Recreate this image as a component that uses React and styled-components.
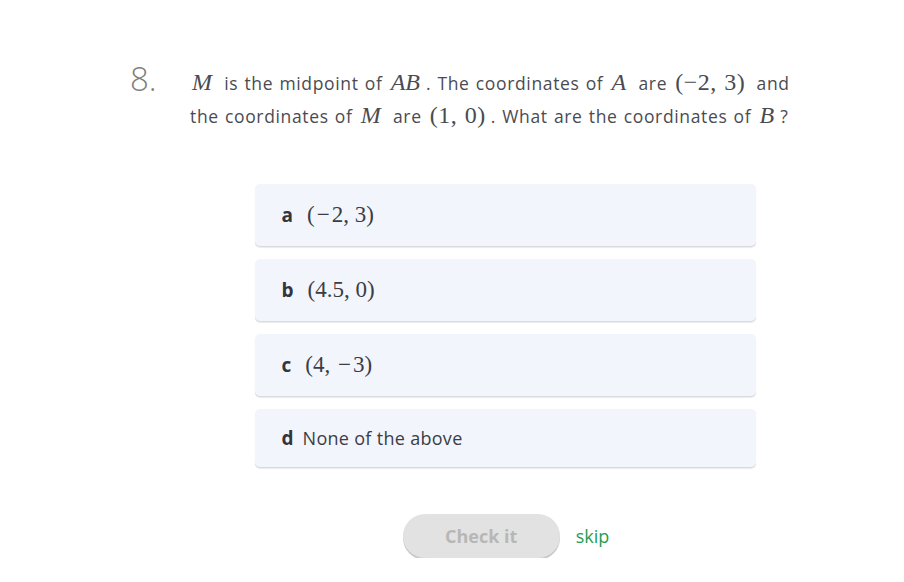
import React from 'react';
import styled, { createGlobalStyle } from 'styled-components';

const GlobalStyle = createGlobalStyle`
  html, body {
    margin: 0;
    padding: 0;
    background: #ffffff;
  }
  body {
    font-family: "Open Sans", Lato, sans-serif;
    color: #3b3d45;
  }
`;

const OpSpan = styled.span`
  margin: 0 2px;
`;

function Op({ children }) {
  return <OpSpan>{children}</OpSpan>;
}

const CHOICES = [
  { letter: 'a', math: true, content: <>(<Op>−</Op>2, 3)</> },
  { letter: 'b', math: true, content: <>(4.5, 0)</> },
  { letter: 'c', math: true, content: <>(4, <Op>−</Op>3)</> },
  { letter: 'd', math: false, content: 'None of the above' },
];

const Page = styled.div`
  padding: 61px 0 0 130px;
  display: flex;
  align-items: flex-start;
`;

const Number = styled.div`
  width: 60px;
  flex-shrink: 0;
  font-size: 33px;
  font-weight: 300;
  color: #80807b;
  line-height: 36px;
`;

const Body = styled.div`
  width: 630px;
  display: flex;
  flex-direction: column;
`;

const Question = styled.p`
  margin: 5px 0 0;
  font-size: 17.5px;
  letter-spacing: 0.65px;
  word-spacing: 1px;
  line-height: 32px;
  color: #4a4b52;
  white-space: nowrap;
`;

const Var = styled.span`
  font-family: "Liberation Serif", "DejaVu Serif", serif;
  font-style: italic;
  font-size: 24px;
  letter-spacing: 0;
  margin: 0 6px 0 2px;
`;

const Math = styled.span`
  font-family: "Liberation Serif", "DejaVu Serif", serif;
  font-size: 24px;
  letter-spacing: 0.5px;
  margin: 0 5px 0 2px;
`;

const Choices = styled.div`
  width: 501px;
  margin: 52px auto 0;
  display: flex;
  flex-direction: column;
  gap: 13px;
`;

const Card = styled.div`
  display: flex;
  align-items: center;
  gap: 14px;
  padding: ${({ $math }) => ($math ? '17px 26px 17px 27px' : '16px 26px 16px 27px')};
  min-height: ${({ $math }) => ($math ? '28px' : '26px')};
  background: #f3f5fc;
  border-radius: 5px;
  box-shadow: 0 1px 0 #d8dae0, 0 2px 1px rgba(0, 0, 0, 0.08);
`;

const Letter = styled.span`
  font-size: 19px;
  font-weight: 700;
  color: #33353c;
`;

const ChoiceMath = styled.span`
  font-family: "Liberation Serif", "DejaVu Serif", serif;
  font-size: 23px;
  color: #3b3d45;
`;

const ChoiceText = styled.span`
  font-size: 18px;
  color: #3b3d45;
  margin-left: -5px;
  letter-spacing: 0.3px;
`;

const Footer = styled.div`
  margin-top: 47px;
  display: flex;
  align-items: center;
  justify-content: center;
  gap: 16px;
  padding-left: 2px;
`;

const CheckButton = styled.button`
  width: 157px;
  height: 44px;
  border: none;
  border-radius: 22px;
  background: #e2e2e2;
  box-shadow: 0 2px 0 #c9c9c9;
  font-family: "Open Sans", Lato, sans-serif;
  font-size: 18px;
  font-weight: 700;
  color: #b7b7b5;
`;

const Skip = styled.a`
  font-size: 18px;
  color: #1f9d55;
  text-decoration: none;
`;

export default function App() {
  return (
    <>
      <GlobalStyle />
      <Page>
        <Number>8.</Number>
        <Body>
          <Question>
            <Var>M</Var> is the midpoint of <Var>AB</Var>. The coordinates of <Var>A</Var> are{' '}
            <Math>(−2, 3)</Math> and
            <br />
            the coordinates of <Var>M</Var> are <Math>(1, 0)</Math>. What are the coordinates of{' '}
            <Var>B</Var>?
          </Question>
          <Choices>
            {CHOICES.map((c) => (
              <Card key={c.letter} $math={c.math}>
                <Letter>{c.letter}</Letter>
                {c.math ? <ChoiceMath>{c.content}</ChoiceMath> : <ChoiceText>{c.content}</ChoiceText>}
              </Card>
            ))}
          </Choices>
          <Footer>
            <CheckButton>Check it</CheckButton>
            <Skip>skip</Skip>
          </Footer>
        </Body>
      </Page>
    </>
  );
}
